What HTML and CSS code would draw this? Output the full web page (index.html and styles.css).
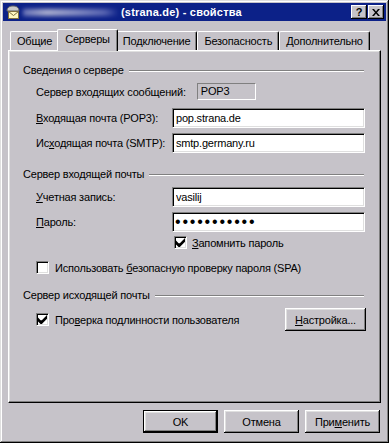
FILE: index.html
```html
<!DOCTYPE html>
<html>
<head>
    <link rel="stylesheet" href="styles.css">
</head>
<body>

<div class="window">
    <div class="titlebar">
        <svg class="title-icon" width="16" height="16" viewBox="0 0 16 16">
            <path d="M2 7 C2 3 5 2 8 2 C11 2 14 3 14 7 Z" fill="#c8c8c8" stroke="#606060" stroke-width="1"/>
            <rect x="3.5" y="7.5" width="10" height="7" fill="#fff8c0" stroke="#807040"/>
            <path d="M3.5 7.5 L8.5 11.5 L13.5 7.5" fill="none" stroke="#807040"/>
        </svg>
        <span class="title-blur"></span>
        <span class="title-text">(strana.de) - свойства</span>
        <span class="caption-buttons">
            <span class="cap-btn help">?</span>
            <span class="cap-btn">
                <svg width="8" height="7" viewBox="0 0 8 7">
                    <path d="M0 0h2l2 2.5 2-2.5h2l-3 3.5 3 3.5h-2l-2-2.5-2 2.5h-2l3-3.5z" fill="#000"/>
                </svg>
            </span>
        </span>
    </div>

    <div class="content">
        <div class="tabs">
            <span class="tab">Общие</span>
            <span class="tab active">Серверы</span>
            <span class="tab">Подключение</span>
            <span class="tab">Безопасность</span>
            <span class="tab">Дополнительно</span>
        </div>

        <div class="panel">
            <div class="group-title"><span>Сведения о сервере</span><span class="etch"></span></div>
            <div class="row row-static">
                <span class="label-auto">Сервер входящих сообщений:</span>
                <span class="static">POP3</span>
            </div>
            <div class="row row-input first">
                <span class="label"><u>В</u>ходящая почта (POP3):</span>
                <input class="field" type="text" value="pop.strana.de">
            </div>
            <div class="row row-input">
                <span class="label">Ис<u>х</u>одящая почта (SMTP):</span>
                <input class="field" type="text" value="smtp.germany.ru">
            </div>

            <div class="group-title gap"><span>Сервер входящей почты</span><span class="etch"></span></div>
            <div class="row row-input first">
                <span class="label"><u>У</u>четная запись:</span>
                <input class="field" type="text" value="vasilij">
            </div>
            <div class="row row-input">
                <span class="label"><u>П</u>ароль:</span>
                <input class="field secret" type="password" value="12345678901">
            </div>
            <div class="row row-check remember">
                <span class="checkbox checked">
                    <svg width="9" height="9" viewBox="0 0 7 7"><path d="M0 2v3l2 2h1l4-4v-3l-4 4h-1z" fill="#000"/></svg>
                </span>
                <span><u>З</u>апомнить пароль</span>
            </div>
            <div class="row row-check spa">
                <span class="checkbox"></span>
                <span>Использовать <u>б</u>езопасную проверку пароля (SPA)</span>
            </div>

            <div class="group-title gap"><span>Сервер исходящей почты</span><span class="etch"></span></div>
            <div class="row row-auth">
                <span class="checkbox checked">
                    <svg width="9" height="9" viewBox="0 0 7 7"><path d="M0 2v3l2 2h1l4-4v-3l-4 4h-1z" fill="#000"/></svg>
                </span>
                <span class="auth-label">Про<u>в</u>ерка подлинности пользователя</span>
                <span class="btn settings"><u>Н</u>астройка...</span>
            </div>
        </div>

        <div class="buttons">
            <span class="btn default">OK</span>
            <span class="btn">Отмена</span>
            <span class="btn">При<u>м</u>енить</span>
        </div>
    </div>
</div>

</body>
</html>
```

FILE: styles.css
```css
body, html {
    margin: 0;
    height: 100%;
    font-family: "Liberation Sans", Arial, sans-serif;
    font-size: 11px;
    letter-spacing: -0.2px;
    color: #000;
    background: #c6c3c9;
}

.window {
    width: 389px;
    height: 443px;
    box-sizing: border-box;
    padding: 3px;
    background: #c6c3c9;
    box-shadow: inset -1px -1px #000, inset 1px 1px #dfdfdf,
                inset -2px -2px #808080, inset 2px 2px #fff;
}

/* title bar */
.titlebar {
    height: 18px;
    display: flex;
    align-items: center;
    background: #0c2188;
    overflow: hidden;
}

.title-icon {
    margin-left: 2px;
    flex: none;
}

.title-blur {
    width: 96px;
    height: 7px;
    margin-left: 2px;
    background: linear-gradient(90deg, #6a74b8 0, #aeb2d0 25%, #8890c4 55%, #5a66b2 85%, #0c2188 100%);
    filter: blur(2px);
    flex: none;
}

.title-text {
    color: #fff;
    font-weight: bold;
    margin-left: 2px;
    letter-spacing: 0.2px;
}

.caption-buttons {
    margin-left: auto;
    margin-right: 2px;
    display: flex;
    gap: 1px;
}

.cap-btn {
    width: 16px;
    height: 14px;
    box-sizing: border-box;
    background: #c6c3c9;
    display: flex;
    align-items: center;
    justify-content: center;
    box-shadow: inset -1px -1px #000, inset 1px 1px #fff,
                inset -2px -2px #808080;
}

.cap-btn.help {
    font-weight: bold;
    font-size: 11px;
    line-height: 14px;
}

/* content */
.content {
    padding: 8px 5px 0 5px;
}

.tabs {
    display: flex;
    align-items: flex-end;
    height: 21px;
    padding-left: 2px;
}

.tab {
    height: 19px;
    box-sizing: border-box;
    padding: 0 6px;
    line-height: 18px;
    border: 1px solid #fff;
    border-bottom: none;
    border-right-color: #000;
    border-radius: 2px 2px 0 0;
    box-shadow: inset -1px 0 #808080;
    background: #c6c3c9;
}

.tab.active {
    height: 22px;
    margin: 0 -2px -1px -2px;
    padding: 0 7px;
    line-height: 19px;
    position: relative;
    z-index: 1;
}

.panel {
    height: 353px;
    box-sizing: border-box;
    padding: 13px 0 0 14px;
    border: 1px solid #fff;
    border-right-color: #000;
    border-bottom-color: #000;
    box-shadow: inset -1px -1px #808080, inset 1px 1px #dfdfdf;
}

.group-title {
    display: flex;
    align-items: center;
    height: 13px;
    line-height: 13px;
    margin-right: 16px;
}

.group-title.gap {
    margin-top: 15px;
}

.etch {
    flex: 1;
    margin-left: 5px;
    border-top: 1px solid #808080;
    border-bottom: 1px solid #fff;
}

.row {
    display: flex;
    align-items: center;
    padding-left: 13px;
}

.row-static {
    margin-top: 6px;
    height: 17px;
}

.label-auto {
    margin-right: 11px;
}

.static {
    width: 59px;
    height: 17px;
    box-sizing: border-box;
    padding-left: 3px;
    line-height: 15px;
    border: 1px solid #808080;
    border-right-color: #fff;
    border-bottom-color: #fff;
}

.row-input {
    margin-top: 5px;
    height: 20px;
}

.row-input.first {
    margin-top: 8px;
}

.group-title + .row-input.first {
    margin-top: 6px;
}

.label {
    width: 136px;
    flex: none;
}

.field {
    width: 193px;
    height: 20px;
    box-sizing: border-box;
    margin: 0;
    padding: 0 3px;
    font-family: "Liberation Sans", Arial, sans-serif;
    font-size: 11px;
    letter-spacing: -0.2px;
    color: #000;
    background: #fff;
    border: 1px solid #808080;
    border-right-color: #fff;
    border-bottom-color: #fff;
    box-shadow: inset 1px 1px #000, inset -1px -1px #dfdfdf;
    outline: none;
}

.field.secret {
    font-size: 16px;
    letter-spacing: 1.8px;
    padding-left: 2px;
}

.row-check {
    height: 13px;
    gap: 5px;
}

.row-check.remember {
    margin-top: 4px;
    padding-left: 151px;
}

.row-check.spa {
    margin-top: 12px;
    gap: 6px;
}

.checkbox {
    width: 13px;
    height: 13px;
    box-sizing: border-box;
    flex: none;
    background: #fff;
    border: 1px solid #808080;
    border-right-color: #fff;
    border-bottom-color: #fff;
    box-shadow: inset 1px 1px #000, inset -1px -1px #dfdfdf;
    display: flex;
    align-items: center;
    justify-content: center;
}

.row-auth {
    margin-top: 6px;
    height: 23px;
    padding-right: 14px;
}

.auth-label {
    margin-left: 6px;
}

.btn {
    width: 75px;
    height: 23px;
    box-sizing: border-box;
    display: flex;
    align-items: center;
    justify-content: center;
    background: #c6c3c9;
    box-shadow: inset -1px -1px #000, inset 1px 1px #fff,
                inset -2px -2px #808080, inset 2px 2px #dfdfdf;
}

.btn.settings {
    width: 81px;
    margin-left: auto;
}

.btn.default {
    border: 1px solid #000;
}

.buttons {
    display: flex;
    justify-content: flex-end;
    gap: 6px;
    margin-top: 7px;
    padding-right: 1px;
}
```
